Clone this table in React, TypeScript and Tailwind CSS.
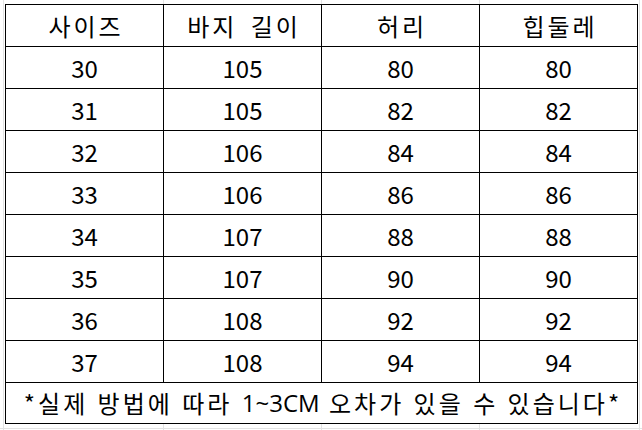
import React from "react";

const rows: [string, string, string, string][] = [
  ["30", "105", "80", "80"],
  ["31", "105", "82", "82"],
  ["32", "106", "84", "84"],
  ["33", "106", "86", "86"],
  ["34", "107", "88", "88"],
  ["35", "107", "90", "90"],
  ["36", "108", "92", "92"],
  ["37", "108", "94", "94"],
];

const header = ["사이즈", "바지 길이", "허리", "힙둘레"];

export default function App() {
  return (
    <div
      className="w-[642px] h-[430px] bg-white overflow-hidden pl-[5px] pt-[4px] text-black bg-[linear-gradient(to_right,transparent_3px,#e3e3e3_3px,#e3e3e3_4px,transparent_4px,transparent_163px,#e3e3e3_163px,#e3e3e3_164px,transparent_164px,transparent_321px,#e3e3e3_321px,#e3e3e3_322px,transparent_322px,transparent_479px,#e3e3e3_479px,#e3e3e3_480px,transparent_480px,transparent_639px,#e3e3e3_639px,#e3e3e3_640px,transparent_640px),linear-gradient(to_bottom,transparent_428px,#e3e3e3_428px,#e3e3e3_429px,transparent_429px)]"
      style={{ fontFamily: '"Noto Sans CJK KR", "Open Sans", sans-serif' }}
    >
      <div className="w-[633px] border-l border-t border-black bg-white grid grid-cols-[158px_158px_158px_158px]">
        {header.map((h, i) => (
          <div
            key={i}
            className="h-[42px] border-r border-b border-black flex items-center justify-center text-[24px] leading-none whitespace-pre tracking-[3px] pl-[3px] [word-spacing:5px]"
          >
            {h}
          </div>
        ))}
        {rows.map((r, ri) =>
          r.map((c, ci) => (
            <div
              key={ri + "-" + ci}
              className="h-[42px] border-r border-b border-black flex items-center justify-center text-[24px] leading-none"
            >
              {c}
            </div>
          ))
        )}
        <div className="col-span-4 h-[41px] border-r border-b border-black flex items-center justify-center text-[24px] leading-none whitespace-pre tracking-[3px] pl-[3px] [word-spacing:1px]">
          <span>*실제 방법에 따라 </span>
          <span className="tracking-normal" style={{ fontFamily: '"Open Sans", sans-serif' }}>1~3CM</span>
          <span> 오차가 있을 수 있습니다*</span>
        </div>
      </div>
    </div>
  );
}
